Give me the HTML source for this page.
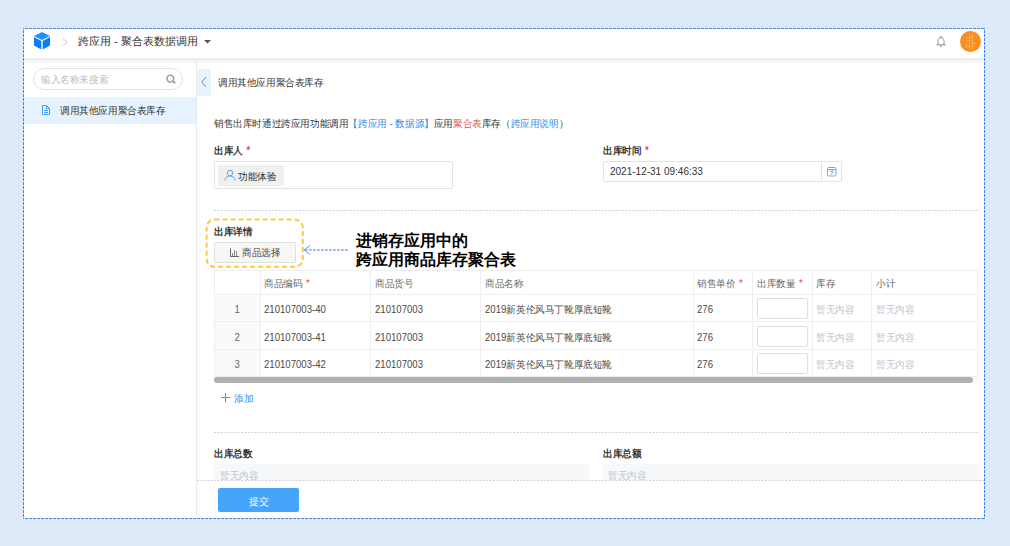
<!DOCTYPE html>
<html><head><meta charset="utf-8">
<style>
*{box-sizing:border-box;margin:0;padding:0}
html,body{width:1010px;height:546px;overflow:hidden;background:#deeafa;font-family:"Liberation Sans",sans-serif;color:#333}
.a{position:absolute;white-space:nowrap}
.t10{font-size:10px;line-height:12px;transform:scaleX(.96);transform-origin:0 0}
.b{font-weight:bold}
.req{color:#e5484d;font-size:10px;margin-left:1px}
.red{color:#e05555}
.blue{color:#2f8ae5}
.grey{color:#bfc5cf}
#frame{position:absolute;left:24px;top:29px;width:960px;height:489px;background:#fff;overflow:hidden}
</style></head><body>
<div id="frame"></div>
<!-- header shadow -->
<div class="a" style="left:24px;top:58px;width:960px;height:6px;background:linear-gradient(#e8e8e8,#f0f0f0 35%,#fff)"></div>
<!-- cube icon -->
<svg class="a" style="left:33px;top:31px" width="18" height="19" viewBox="0 0 18 19">
<path d="M9 1 L17 5 L9 9 L1 5 Z" fill="#1e90ff"/>
<path d="M1 6 L8.3 10 L8.3 18.5 L1 14.5 Z" fill="#0a7cff"/>
<path d="M17 6 L9.7 10 L9.7 18.5 L17 14.5 Z" fill="#0a7cff"/>
</svg>
<svg class="a" style="left:61px;top:37px" width="8" height="10"><path d="M2 1.5 L6 5 L2 8.5" fill="none" stroke="#cfc8c4" stroke-width="1"/></svg>
<div class="a" style="left:78px;top:35px;font-size:11px;line-height:13px;color:#333">跨应用 - 聚合表数据调用</div>
<svg class="a" style="left:204px;top:40px" width="7" height="4"><path d="M0 0 H7 L3.5 3.5Z" fill="#555"/></svg>
<!-- bell -->
<svg class="a" style="left:935px;top:35px" width="12" height="13" viewBox="0 0 12 13"><path d="M6 0.8 V2.3" stroke="#8a8a8a" stroke-width="1"/><path d="M3 9.5 V6.2 C3 3.8 4.3 2.5 6 2.5 C7.7 2.5 9 3.8 9 6.2 V9.5" fill="none" stroke="#8a8a8a" stroke-width="0.9"/><path d="M1.6 9.8 H10.4" stroke="#8a8a8a" stroke-width="1.1"/><path d="M5 11.4 H7" stroke="#9a9a9a" stroke-width="1"/></svg>
<!-- avatar -->
<div class="a" style="left:960px;top:31px;width:21px;height:21px;border-radius:50%;background:#f98d20;overflow:hidden">
<div class="a" style="left:6px;top:5px;width:1px;height:12px;background:rgba(255,215,160,.35)"></div>
<div class="a" style="left:9px;top:3px;width:1px;height:15px;background:rgba(255,215,160,.4)"></div>
<div class="a" style="left:12px;top:2px;width:1px;height:17px;background:rgba(255,215,160,.45)"></div>
<div class="a" style="left:7px;top:6px;width:5px;height:1px;background:rgba(255,215,160,.3)"></div>
<div class="a" style="left:7px;top:9px;width:4px;height:1px;background:rgba(255,215,160,.3)"></div>
<div class="a" style="left:12px;top:12px;width:5px;height:1px;background:rgba(255,215,160,.3)"></div>
<div class="a" style="left:7px;top:15px;width:5px;height:1px;background:rgba(255,215,160,.3)"></div>
</div>
<!-- sidebar -->
<div class="a" style="left:196px;top:61px;width:1px;height:457px;background:#e9e9e9"></div>
<div class="a" style="left:33px;top:68px;width:150px;height:22px;border:1px solid #e3e3e3;border-radius:11px"></div>
<div class="a t10" style="left:41px;top:74px;color:#bbb">输入名称来搜索</div>
<svg class="a" style="left:165px;top:74px" width="12" height="12" viewBox="0 0 12 12"><circle cx="5.3" cy="4.6" r="3.4" fill="none" stroke="#9c9c9c" stroke-width="1.6"/><path d="M7.8 7.2 L10.2 9.4" stroke="#9c9c9c" stroke-width="1.8"/></svg>
<div class="a" style="left:24px;top:97px;width:172px;height:27px;background:#e6f3fe"></div>
<svg class="a" style="left:40px;top:104px" width="12" height="12" viewBox="0 0 12 12"><path d="M2.5 1.5 H6.5 L9.5 4.5 V10.5 H2.5 Z" fill="none" stroke="#42a0f5" stroke-width="1" stroke-linejoin="round"/><path d="M6.5 1.5 V4.5 H9.5" fill="none" stroke="#42a0f5" stroke-width="1"/><path d="M4 6.5 H8 M4 8.5 H8" stroke="#42a0f5" stroke-width="1"/></svg>
<div class="a t10" style="left:60px;top:105px">调用其他应用聚合表库存</div>

<!-- main -->
<div class="a" style="left:197px;top:69px;width:14px;height:27px;background:#e8f3fe"></div>
<svg class="a" style="left:200px;top:76px" width="8" height="12"><path d="M6 1 L1.8 6 L6 11" fill="none" stroke="#5b8fd6" stroke-width="1"/></svg>
<div class="a t10" style="left:218px;top:77px">调用其他应用聚合表库存</div>
<div class="a t10" style="left:214px;top:118px">销售出库时通过跨应用功能调用<span class="blue">【跨应用 - 数据源】</span>应用<span class="red">聚合表</span>库存（<span class="blue">跨应用说明</span>）</div>

<div class="a t10 b" style="left:214px;top:145px">出库人 <span class="req">*</span></div>
<div class="a" style="left:214px;top:161px;width:239px;height:28px;border:1px solid #e3e3e3;border-radius:2px"></div>
<div class="a" style="left:218px;top:165px;width:66px;height:21px;background:#f0f0f0;border-radius:2px"></div>
<svg class="a" style="left:224px;top:169px" width="12" height="12" viewBox="0 0 12 12"><circle cx="6" cy="4" r="2.8" fill="none" stroke="#5aa6f5" stroke-width="1"/><path d="M1 11.5 C1 8.5 3 7 6 7 C9 7 11 8.5 11 11.5" fill="none" stroke="#5aa6f5" stroke-width="1"/></svg>
<div class="a t10" style="left:238px;top:171px">功能体验</div>

<div class="a t10 b" style="left:603px;top:145px">出库时间 <span class="req">*</span></div>
<div class="a" style="left:603px;top:161px;width:239px;height:21px;border:1px solid #e3e3e3;border-radius:2px"></div>
<div class="a" style="left:821px;top:162px;width:1px;height:19px;background:#e3e3e3"></div>
<div class="a" style="left:610px;top:166px;font-size:10px;line-height:11px;color:#333">2021-12-31 09:46:33</div>
<svg class="a" style="left:826px;top:166px" width="11" height="11" viewBox="0 0 11 11"><rect x="1.5" y="1.5" width="8.5" height="8.5" rx="1.3" fill="none" stroke="#6aaaf6" stroke-width="1"/><path d="M1.5 3.6 H10" stroke="#6aaaf6" stroke-width="1.2"/><path d="M4.3 5.3 H6.9 L5.3 8.6" fill="none" stroke="#5a9ef0" stroke-width="0.9"/></svg>

<svg class="a" style="left:214px;top:210px" width="764" height="1"><path d="M0 0.5 H764" stroke="#ccd3de" stroke-width="1" stroke-dasharray="2 1.4"/></svg>

<!-- detail -->
<svg class="a" style="left:200px;top:213px" width="110" height="60"><rect x="6.6" y="6.6" width="96.2" height="47.2" rx="8" fill="none" stroke="#fdc745" stroke-width="2" stroke-dasharray="5 3"/></svg>
<div class="a t10 b" style="left:214px;top:226px">出库详情</div>
<div class="a" style="left:214px;top:242px;width:82px;height:21px;background:#f7f7f7;border:1px solid #e0e0e0;border-radius:2px"></div>
<svg class="a" style="left:228px;top:247px" width="12" height="12" viewBox="0 0 12 12"><path d="M2.5 1.5 V9.5 H11" fill="none" stroke="#666" stroke-width="1"/><path d="M4.5 6 V9 M6.5 3 V9 M8.5 4 V9" stroke="#888" stroke-width="1"/></svg>
<div class="a t10" style="left:242px;top:247px;color:#444">商品选择</div>

<svg class="a" style="left:302px;top:244px" width="50" height="12"><path d="M8 1.5 L2 6 L8 10.5" fill="none" stroke="#5d98ec" stroke-width="1"/><path d="M3 6 H46" stroke="#7eaaee" stroke-width="1.3" stroke-dasharray="2.8 1.2"/></svg>
<div class="a b" style="left:356px;top:231px;font-size:16px;line-height:19px;color:#000">进销存应用中的<br>跨应用商品库存聚合表</div>

<!-- table -->
<div id="tbl" class="a" style="left:214px;top:270px;width:764px;height:113px;border:1px solid #efefef;border-bottom:none"></div>
<div class="a" style="left:215px;top:295px;width:45px;height:81px;background:#fafafa"></div>
<div class="a" style="left:260px;top:271px;width:1px;height:106px;background:#efefef"></div>
<div class="a" style="left:370px;top:271px;width:1px;height:106px;background:#efefef"></div>
<div class="a" style="left:480px;top:271px;width:1px;height:106px;background:#efefef"></div>
<div class="a" style="left:693px;top:271px;width:1px;height:106px;background:#efefef"></div>
<div class="a" style="left:752px;top:271px;width:1px;height:106px;background:#efefef"></div>
<div class="a" style="left:812px;top:271px;width:1px;height:106px;background:#efefef"></div>
<div class="a" style="left:871px;top:271px;width:1px;height:106px;background:#efefef"></div>
<div class="a" style="left:215px;top:294px;width:762px;height:1px;background:#efefef"></div>
<div class="a" style="left:215px;top:321px;width:762px;height:1px;background:#efefef"></div>
<div class="a" style="left:215px;top:349px;width:762px;height:1px;background:#efefef"></div>
<div class="a" style="left:215px;top:376px;width:762px;height:1px;background:#efefef"></div>
<div class="a t10" style="left:264px;top:278px;color:#6b6b6b">商品编码 <span class="req">*</span></div>
<div class="a t10" style="left:375px;top:278px;color:#6b6b6b">商品货号</div>
<div class="a t10" style="left:485px;top:278px;color:#6b6b6b">商品名称</div>
<div class="a t10" style="left:697px;top:278px;color:#6b6b6b">销售单价 <span class="req">*</span></div>
<div class="a t10" style="left:757px;top:278px;color:#6b6b6b">出库数量 <span class="req">*</span></div>
<div class="a t10" style="left:816px;top:278px;color:#666">库存</div>
<div class="a t10" style="left:876px;top:278px;color:#666">小计</div>
<div class="a t10" style="left:215px;width:46px;text-align:center;top:304px;color:#666">1</div>
<div class="a t10" style="left:264px;top:304px;color:#4a4a4a">210107003-40</div>
<div class="a t10" style="left:375px;top:304px;color:#4a4a4a">210107003</div>
<div class="a t10" style="left:485px;top:304px;color:#4a4a4a">2019新英伦风马丁靴厚底短靴</div>
<div class="a t10" style="left:697px;top:304px;color:#4a4a4a">276</div>
<div class="a t10 grey" style="left:816px;top:304px">暂无内容</div>
<div class="a t10 grey" style="left:876px;top:304px">暂无内容</div>
<div class="a t10" style="left:215px;width:46px;text-align:center;top:331.5px;color:#666">2</div>
<div class="a t10" style="left:264px;top:331.5px;color:#4a4a4a">210107003-41</div>
<div class="a t10" style="left:375px;top:331.5px;color:#4a4a4a">210107003</div>
<div class="a t10" style="left:485px;top:331.5px;color:#4a4a4a">2019新英伦风马丁靴厚底短靴</div>
<div class="a t10" style="left:697px;top:331.5px;color:#4a4a4a">276</div>
<div class="a t10 grey" style="left:816px;top:331.5px">暂无内容</div>
<div class="a t10 grey" style="left:876px;top:331.5px">暂无内容</div>
<div class="a t10" style="left:215px;width:46px;text-align:center;top:359px;color:#666">3</div>
<div class="a t10" style="left:264px;top:359px;color:#4a4a4a">210107003-42</div>
<div class="a t10" style="left:375px;top:359px;color:#4a4a4a">210107003</div>
<div class="a t10" style="left:485px;top:359px;color:#4a4a4a">2019新英伦风马丁靴厚底短靴</div>
<div class="a t10" style="left:697px;top:359px;color:#4a4a4a">276</div>
<div class="a t10 grey" style="left:816px;top:359px">暂无内容</div>
<div class="a t10 grey" style="left:876px;top:359px">暂无内容</div>
<div class="a" style="left:757px;top:298px;width:51px;height:21px;border:1px solid #dcdfe6;border-radius:2px;background:#fff"></div>
<div class="a" style="left:757px;top:326px;width:51px;height:21px;border:1px solid #dcdfe6;border-radius:2px;background:#fff"></div>
<div class="a" style="left:757px;top:353px;width:51px;height:21px;border:1px solid #dcdfe6;border-radius:2px;background:#fff"></div>
<div class="a" style="left:214px;top:377px;width:759px;height:6px;background:#b0b0b0;border-radius:3px"></div>

<svg class="a" style="left:220px;top:392px" width="11" height="11"><path d="M5.5 1 V10.5 M1 5.5 H10.5" stroke="#3a9bf0" stroke-width="1"/></svg>
<div class="a t10 blue" style="left:234px;top:393px">添加</div>
<svg class="a" style="left:214px;top:432px" width="764" height="1"><path d="M0 0.5 H764" stroke="#ccd3de" stroke-width="1" stroke-dasharray="2 1.4"/></svg>
<div class="a t10 b" style="left:214px;top:448px">出库总数</div>
<div class="a t10 b" style="left:603px;top:448px">出库总额</div>
<div class="a" style="left:214px;top:464px;width:375px;height:20px;background:#f7f8fa"></div>
<div class="a" style="left:603px;top:464px;width:375px;height:20px;background:#f7f8fa"></div>
<div class="a t10 grey" style="left:220px;top:470px">暂无内容</div>
<div class="a t10 grey" style="left:608px;top:470px">暂无内容</div>
<!-- bottom bar -->
<div class="a" style="left:197px;top:480px;width:787px;height:38px;background:#fff"></div>
<svg class="a" style="left:197px;top:480px" width="787" height="1"><path d="M0 0.5 H787" stroke="#d2d2d2" stroke-width="1" stroke-dasharray="2 1.4"/></svg>
<div class="a" style="left:218px;top:488px;width:81px;height:24px;background:#45a5fb;border-radius:2px;color:#fff;text-align:center;font-size:10px;line-height:25px;padding-top:1px">提交</div>
<svg class="a" style="left:0;top:0" width="1010" height="546"><g fill="none" stroke="#4a85e0" stroke-width="1" stroke-dasharray="3 1" stroke-dashoffset="2">
<path d="M23 28.5 H985"/><path d="M23.5 28 V519"/><path d="M984.5 28 V519"/><path d="M23 518.5 H985"/></g></svg>
</body></html>
